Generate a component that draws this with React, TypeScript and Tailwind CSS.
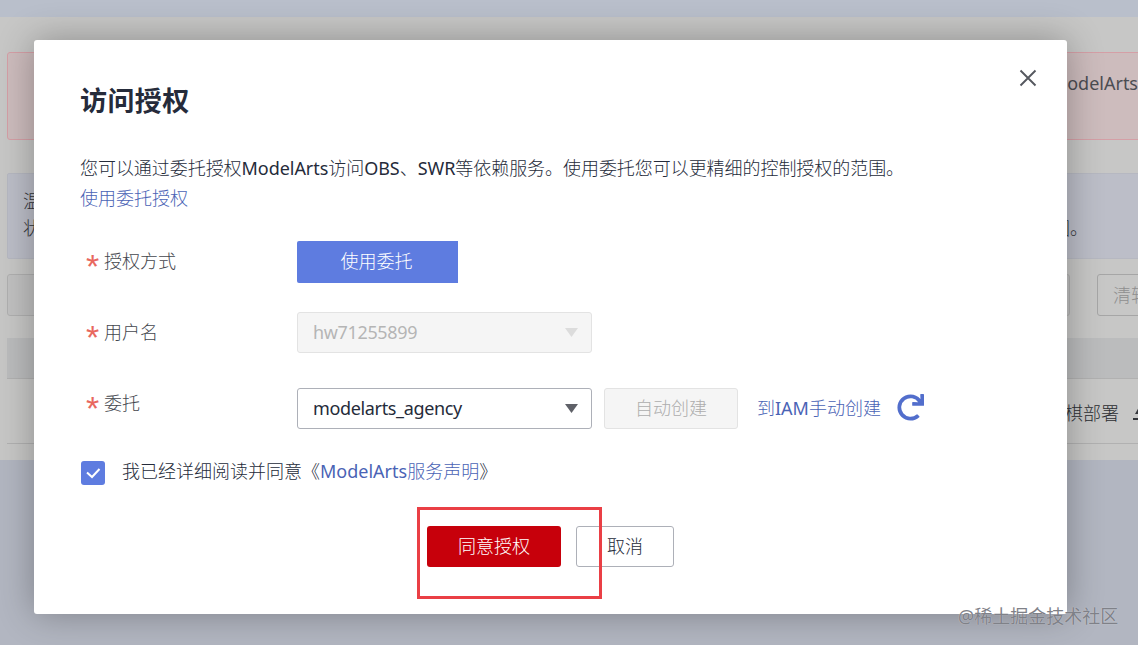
import * as React from 'react'
import { FaRedo } from 'react-icons/fa'

const font = { fontFamily: '"Noto Sans", "Noto Sans CJK SC", sans-serif' }

const Caret = ({ className = "" }: any) => (
    <svg width="13" height="9" viewBox="0 0 13 9" className={className}>
        <path d="M0 0H13L6.5 9Z" fill="currentColor" />
    </svg>
)

const Label = ({ children, className = "" }: any) => (
    <div className={"flex w-[216px] shrink-0 items-center pl-[5px] text-[18px] font-light leading-[30px] text-[#44474e] " + className}>
        <span className="h-[30px] w-[18px] pt-[2px] font-['Liberation_Sans'] text-[34px] font-normal leading-[34px] text-[#e8685f]">*</span>
        <span className="-mt-[2px]">{children}</span>
    </div>
)

// page behind the dialog, already dimmed
const Background = () => (
    <div className="flex h-full flex-col">
        <div className="h-[17px] shrink-0 bg-[#b9bfcb]" />
        <div className="flex h-[443px] shrink-0 flex-col bg-[#c7c7c6] pl-[7px] pt-[35px] text-[18px] text-[#4b4d52]">
            <div className="-mr-[20px] flex h-[88px] shrink-0 justify-end rounded-[3px] border border-[#d59fa6] bg-[#cdbcbd] pt-[15px] leading-[30px]">
                <span className="mr-[19px]">ModelArts</span>
            </div>
            <div className="-mr-[20px] mt-[33px] h-[86px] shrink-0 rounded-[2px] border border-[#b6b8c1] bg-[#bcbec8] pl-[15px] pt-[14px] font-light leading-[27px] text-[#33353a]">
                <div>温</div>
                <div className="flex justify-between pr-[69px]">
                    <span>状</span>
                    <span>围。</span>
                </div>
            </div>
            <div className="mt-[15px] flex h-[42px] shrink-0 gap-[27px]">
                <div className="h-full w-[1063px] shrink-0 rounded-[3px] border border-[#b0b0b0] bg-[#c1c1c1]" />
                <div className="h-full w-[80px] shrink-0 rounded-[3px] border border-[#a6a6a6] pl-[15px] font-light leading-[40px] text-[#8f8f8f]">清轴</div>
            </div>
            <div className="-mr-[20px] mt-[22px] h-[41px] shrink-0 border-b border-[#b1b1b1] bg-[#bbbcbd]" />
            <div className="-mr-[20px] flex h-[65px] shrink-0 justify-end border-b border-[#b1b1b1] pr-[13px] pt-[19px] font-light leading-[30px] text-[#2b2d31]">
                棋部署
                <svg width="12" height="13" viewBox="0 0 12 13" className="ml-[14px] mt-[9px] text-[#33353a]">
                    <path d="M6 0L10 7H2ZM0 11H12V13H0Z" fill="currentColor" />
                </svg>
            </div>
        </div>
        <div className="flex-1 bg-[#b2b6c1]" />
    </div>
)

const Dialog = () => (
    <div className="absolute left-[34px] top-[40px] flex h-[574px] w-[1033px] flex-col rounded-[3px] bg-white pl-[47px] pt-[42px] shadow-[0_0_36px_rgba(0,0,0,0.3)]">
        <svg width="18" height="18" viewBox="0 0 18 18" className="absolute left-[985px] top-[29px] text-[#55585f]">
            <path d="M1.5 1.5L16.5 16.5M16.5 1.5L1.5 16.5" stroke="currentColor" strokeWidth="1.9" fill="none" />
        </svg>
        <h2 className="-ml-[1px] text-[27px] font-bold leading-[38px] tracking-[0.4px] text-[#252b3a]">访问授权</h2>
        <p className="-ml-[1px] mt-[33px] text-[18px] font-light leading-[30px] tracking-[-0.05px] text-[#252b3a]">您可以通过委托授权<span className="font-normal">ModelArts</span>访问<span className="font-normal">OBS</span>、<span className="font-normal">SWR</span>等依赖服务。使用委托您可以更精细的控制授权的范围。</p>
        <a className="-ml-[1px] text-[18px] font-light leading-[30px] text-[#4a63b5]">使用委托授权</a>

        <div className="mt-[28px] flex h-[42px] items-center">
            <Label>授权方式</Label>
            <div className="flex h-[42px] w-[161px] items-center justify-center rounded-l-[2px] bg-[#5e7ce0] pb-[2px] pr-[2px] text-[18px] font-light text-white">使用委托</div>
        </div>

        <div className="mt-[29px] flex h-[41px] items-center">
            <Label>用户名</Label>
            <div className="flex h-[41px] w-[295px] items-center justify-between rounded-[3px] border border-[#e3e3e3] bg-[#f5f5f5] pl-[15px] pr-[13px] text-[18px] tracking-[-0.35px] text-[#b5b5b5]">
                hw71255899
                <Caret className="text-[#dcdcdc]" />
            </div>
        </div>

        <div className="mt-[35px] flex h-[41px]">
            <Label className="-mt-[3px] h-[37px]">委托</Label>
            <div className="flex h-[41px] w-[295px] items-center justify-between rounded-[3px] border border-[#adb0b8] pl-[15px] pr-[13px] text-[18px] tracking-[-0.35px] text-[#252b3a]">
                modelarts_agency
                <Caret className="text-[#5f6168]" />
            </div>
            <div className="ml-[12px] flex h-[41px] w-[134px] items-center justify-center rounded-[3px] border border-[#e3e3e3] bg-[#f5f5f5] text-[18px] font-light text-[#adadad]">自动创建</div>
            <a className="ml-[19px] text-[18px] font-light leading-[41px] text-[#4a63b5]">到<span className="font-normal">IAM</span>手动创建</a>
            <FaRedo className="ml-[16px] mt-[6px] text-[#526ecc]" size={27} />
        </div>

        <div className="mt-[32px] flex h-[24px] items-center">
            <div className="flex h-[24px] w-[24px] items-center justify-center rounded-[3px] bg-[#5e7ce0]">
                <svg width="16" height="12" viewBox="0 0 16 12">
                    <path d="M2 5.5L7 10L14.5 2" stroke="white" strokeWidth="2" fill="none" />
                </svg>
            </div>
            <span className="-mt-[4px] ml-[17px] text-[18px] font-light text-[#252b3a]">我已经详细阅读并同意《<span className="text-[#4a63b5]"><span className="font-normal">ModelArts</span>服务声明</span>》</span>
        </div>

        <div className="ml-[346px] mt-[41px] flex h-[41px] gap-[15px]">
            <div className="flex h-[41px] w-[134px] items-center justify-center rounded-[3px] bg-[#c7000b] text-[18px] font-light text-white">同意授权</div>
            <div className="flex h-[41px] w-[98px] items-center justify-center rounded-[3px] border border-[#adb0b8] text-[18px] font-light text-[#252b3a]">取消</div>
        </div>
    </div>
)

export default function App() {
    return (
        <div className="relative h-[645px] w-[1138px] overflow-hidden bg-[#b2b6c1]" style={font}>
            <Background />
            <Dialog />
            {/* annotation drawn on the screenshot */}
            <div className="absolute left-[417px] top-[507px] h-[92px] w-[185px] border-[3px] border-[#ea3f45]" />
            <div className="absolute left-[958px] top-[604px] text-[18px] leading-[24px] text-[#7f8188] [text-shadow:0_0_1px_rgba(255,255,255,0.6)]">@稀土掘金技术社区</div>
        </div>
    )
}
